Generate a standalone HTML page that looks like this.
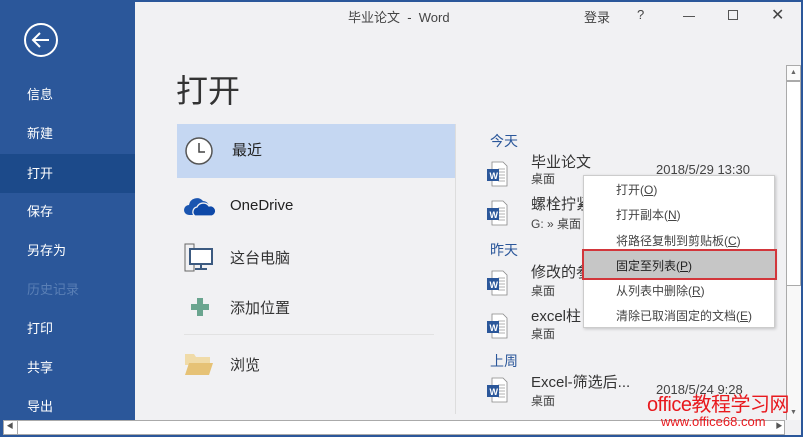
<!DOCTYPE html>
<html><head><meta charset="utf-8"><style>
*{margin:0;padding:0;box-sizing:border-box}
html,body{width:803px;height:437px;overflow:hidden}
body{background:#2b579a;font-family:"Liberation Sans","Noto Sans CJK SC",sans-serif;position:relative}
.a{position:absolute;white-space:nowrap}
.main{left:135px;top:2px;width:666px;height:433px;background:#f1f1f3}
.nav{left:0;color:#fff;font-size:13px;padding-left:27px;width:135px;height:39px;line-height:39px}
.t{color:#444;font-size:13px}
.fn{font-size:15px;color:#333}
.fs{font-size:12px;color:#444}
.mi{left:616px;font-size:12px;color:#444}
</style></head><body>
<div class="a main"></div>
<svg class="a" style="left:23px;top:22px" width="36" height="36"><circle cx="18" cy="18" r="16" fill="none" stroke="#fff" stroke-width="2"/><path d="M26 18H11M17 11l-7 7 7 7" fill="none" stroke="#fff" stroke-width="2"/></svg>
<div class="a nav" style="top:75px">信息</div>
<div class="a nav" style="top:114px">新建</div>
<div class="a nav" style="top:154px;background:#1c4a8a">打开</div>
<div class="a nav" style="top:192px">保存</div>
<div class="a nav" style="top:231px">另存为</div>
<div class="a nav" style="top:270px;color:#5a7fb5">历史记录</div>
<div class="a nav" style="top:309px">打印</div>
<div class="a nav" style="top:348px">共享</div>
<div class="a nav" style="top:387px">导出</div>
<div class="a t" style="left:348px;top:7px">毕业论文 &nbsp;- &nbsp;Word</div>
<div class="a t" style="left:584px;top:7px">登录</div>
<div class="a t" style="left:637px;top:7px">?</div>
<div class="a" style="left:683px;top:16px;width:12px;height:1px;background:#555"></div>
<div class="a" style="left:728px;top:10px;width:10px;height:10px;border:1px solid #555"></div>
<div class="a t" style="left:771px;top:5px;font-size:16px">✕</div>
<div class="a" style="left:176px;top:66px;font-size:32px;color:#333">打开</div>
<div class="a" style="left:177px;top:124px;width:278px;height:54px;background:#c5d7f2"></div>
<div class="a" style="left:455px;top:124px;width:1px;height:290px;background:#ddd"></div>
<svg class="a" style="left:184px;top:136px" width="30" height="30"><circle cx="15" cy="15" r="13" fill="#fff" stroke="#555" stroke-width="1.5"/><path d="M15 7v9h6" fill="none" stroke="#444" stroke-width="1.5"/></svg>
<div class="a fn" style="left:232px;top:139px;color:#222">最近</div>
<svg class="a" style="left:183px;top:195px" width="34" height="22"><path d="M6 20a5 5 0 0 1 0-10a8 8 0 0 1 14-4a6 6 0 0 1 6 5a5 5 0 0 1 1 9z" fill="#1a55b0"/><path d="M12 21a5 5 0 0 1 2-9a7 7 0 0 1 12-1a5 5 0 0 1 3 10z" fill="#0e49a8" stroke="#f1f1f3" stroke-width="1.3"/></svg>
<div class="a fn" style="left:230px;top:197px;color:#222">OneDrive</div>
<svg class="a" style="left:184px;top:241px" width="32" height="32"><rect x="1" y="3" width="9" height="27" fill="none" stroke="#666" stroke-width="1"/><rect x="6" y="8" width="22" height="15" fill="#fff" stroke="#3c5a80" stroke-width="2"/><path d="M17 23v4M11 28h12" stroke="#3c5a80" stroke-width="2"/></svg>
<div class="a fn" style="left:230px;top:247px">这台电脑</div>
<svg class="a" style="left:190px;top:297px" width="20" height="20"><path d="M7 1h6v6h6v6h-6v6H7v-6H1V7h6z" fill="#6aa58f"/></svg>
<div class="a fn" style="left:230px;top:297px">添加位置</div>
<div class="a" style="left:184px;top:334px;width:250px;height:1px;background:#e2e2e2"></div>
<svg class="a" style="left:184px;top:352px" width="30" height="24"><path d="M1 2h9l2 3h14v8H1z" fill="#f0dba8"/><path d="M1 23l4-12h24l-4 12z" fill="#e6c276"/></svg>
<div class="a fn" style="left:230px;top:354px">浏览</div>
<div class="a" style="left:490px;top:131px;font-size:14px;color:#2b579a">今天</div>
<div class="a" style="left:490px;top:240px;font-size:14px;color:#2b579a">昨天</div>
<div class="a" style="left:490px;top:351px;font-size:14px;color:#2b579a">上周</div>
<svg width="0" height="0" style="position:absolute"><defs><g id="w"><path d="M5 1h11l4 4v20H5z" fill="#fff" stroke="#888" stroke-width=".8"/><path d="M11 8h7M11 11h7M11 14h7M11 17h7M11 20h7" stroke="#999" stroke-width=".8"/><rect x="0" y="8" width="12" height="12" fill="#2b579a"/><text x="2.5" y="18" font-size="9" font-weight="bold" fill="#fff" font-family="Liberation Sans">W</text></g></defs></svg>
<svg class="a" style="left:487px;top:161px" width="22" height="27"><use href="#w"/></svg>
<svg class="a" style="left:487px;top:200px" width="22" height="27"><use href="#w"/></svg>
<svg class="a" style="left:487px;top:270px" width="22" height="27"><use href="#w"/></svg>
<svg class="a" style="left:487px;top:313px" width="22" height="27"><use href="#w"/></svg>
<svg class="a" style="left:487px;top:377px" width="22" height="27"><use href="#w"/></svg>
<div class="a fn" style="left:531px;top:151px">毕业论文</div><div class="a fs" style="left:531px;top:170px">桌面</div>
<div class="a" style="left:656px;top:162px;font-size:13px;color:#444">2018/5/29 13:30</div>
<div class="a fn" style="left:531px;top:193px">螺栓拧紧</div><div class="a fs" style="left:531px;top:215px">G: » 桌面</div>
<div class="a fn" style="left:531px;top:261px">修改的参</div><div class="a fs" style="left:531px;top:282px">桌面</div>
<div class="a fn" style="left:531px;top:305px">excel柱</div><div class="a fs" style="left:531px;top:325px">桌面</div>
<div class="a fn" style="left:531px;top:371px">Excel-筛选后...</div><div class="a fs" style="left:531px;top:392px">桌面</div>
<div class="a" style="left:656px;top:382px;font-size:13px;color:#444">2018/5/24 9:28</div>
<div class="a" style="left:583px;top:175px;width:192px;height:153px;background:#fff;border:1px solid #ccc;box-shadow:1px 1px 3px rgba(0,0,0,.2)"></div>
<div class="a" style="left:582px;top:249px;width:195px;height:31px;background:#c6c6c6;border:2px solid #d2363b"></div>
<div class="a mi" style="top:181px">打开(<u>O</u>)</div>
<div class="a mi" style="top:206px">打开副本(<u>N</u>)</div>
<div class="a mi" style="top:232px">将路径复制到剪贴板(<u>C</u>)</div>
<div class="a mi" style="top:257px;color:#222">固定至列表(<u>P</u>)</div>
<div class="a mi" style="top:282px">从列表中删除(<u>R</u>)</div>
<div class="a mi" style="top:307px">清除已取消固定的文档(<u>E</u>)</div>
<div class="a" style="left:786px;top:65px;width:15px;height:355px;background:#f8f8f8;border-left:1px solid #aaa"></div>
<div class="a" style="left:786px;top:65px;width:15px;height:16px;border:1px solid #aaa;background:#fafafa;font-size:7px;color:#666;text-align:center;line-height:14px">▲</div>
<div class="a" style="left:786px;top:81px;width:15px;height:205px;border:1px solid #aaa;background:#fff"></div>
<div class="a" style="left:786px;top:405px;width:15px;height:15px;font-size:7px;color:#666;text-align:center;line-height:15px">▼</div>
<div class="a" style="left:3px;top:420px;width:782px;height:15px;background:#fff;border:1px solid #aaa"></div>
<div class="a" style="left:3px;top:420px;width:15px;height:15px;border-right:1px solid #aaa;font-size:7px;color:#555;text-align:center;line-height:14px">◀</div>
<div class="a" style="left:773px;top:420px;width:12px;height:15px;font-size:7px;color:#555;text-align:center;line-height:14px">▶</div>
<div class="a" style="left:647px;top:388px;font-size:20px;color:#e8191e;letter-spacing:-0.5px">office教程学习网</div>
<div class="a" style="left:661px;top:414px;font-size:13px;color:#e8191e">www.office68.com</div>
</body></html>
